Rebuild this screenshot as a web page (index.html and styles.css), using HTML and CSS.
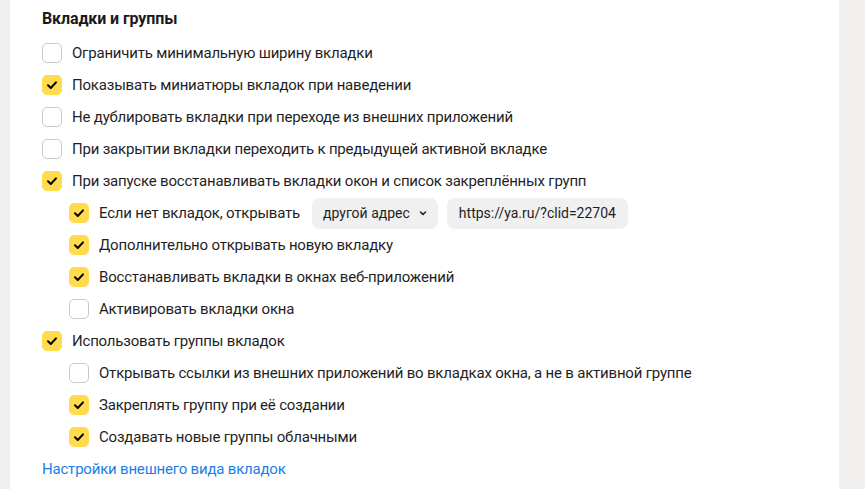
FILE: index.html
```
<!DOCTYPE html>
<html lang="ru">
<head>
<meta charset="utf-8">
<link rel="stylesheet" href="styles.css">
</head>
<body>
<div class="page">
  <section class="panel">
    <h2 class="title">Вкладки и группы</h2>
    <ul class="list">
      <li class="row"><span class="cb"></span><span class="label">Ограничить минимальную ширину вкладки</span></li>
      <li class="row"><span class="cb on"><svg viewBox="0 0 20 20"><path d="M6 10.2l2.8 2.8 5.2-5.6"/></svg></span><span class="label">Показывать миниатюры вкладок при наведении</span></li>
      <li class="row"><span class="cb"></span><span class="label">Не дублировать вкладки при переходе из внешних приложений</span></li>
      <li class="row"><span class="cb"></span><span class="label">При закрытии вкладки переходить к предыдущей активной вкладке</span></li>
      <li class="row"><span class="cb on"><svg viewBox="0 0 20 20"><path d="M6 10.2l2.8 2.8 5.2-5.6"/></svg></span><span class="label">При запуске восстанавливать вкладки окон и список закреплённых групп</span></li>
      <li class="row sub"><span class="cb on"><svg viewBox="0 0 20 20"><path d="M6 10.2l2.8 2.8 5.2-5.6"/></svg></span><span class="label">Если нет вкладок, открывать</span>
        <span class="select">другой адрес<svg class="chev" viewBox="0 0 10 10"><path d="M2.5 4l2.5 2.5 2.5-2.5"/></svg></span>
        <span class="input">https://ya.ru/?clid=22704</span>
      </li>
      <li class="row sub"><span class="cb on"><svg viewBox="0 0 20 20"><path d="M6 10.2l2.8 2.8 5.2-5.6"/></svg></span><span class="label">Дополнительно открывать новую вкладку</span></li>
      <li class="row sub"><span class="cb on"><svg viewBox="0 0 20 20"><path d="M6 10.2l2.8 2.8 5.2-5.6"/></svg></span><span class="label">Восстанавливать вкладки в окнах веб-приложений</span></li>
      <li class="row sub"><span class="cb"></span><span class="label">Активировать вкладки окна</span></li>
      <li class="row"><span class="cb on"><svg viewBox="0 0 20 20"><path d="M6 10.2l2.8 2.8 5.2-5.6"/></svg></span><span class="label">Использовать группы вкладок</span></li>
      <li class="row sub"><span class="cb"></span><span class="label">Открывать ссылки из внешних приложений во вкладках окна, а не в активной группе</span></li>
      <li class="row sub"><span class="cb on"><svg viewBox="0 0 20 20"><path d="M6 10.2l2.8 2.8 5.2-5.6"/></svg></span><span class="label">Закреплять группу при её создании</span></li>
      <li class="row sub"><span class="cb on"><svg viewBox="0 0 20 20"><path d="M6 10.2l2.8 2.8 5.2-5.6"/></svg></span><span class="label">Создавать новые группы облачными</span></li>
    </ul>
    <a class="link" href="#">Настройки внешнего вида вкладок</a>
  </section>
</div>
</body>
</html>
```
FILE: styles.css
```
html, body {
  margin: 0;
  padding: 0;
  background: #f0efed;
  font-family: Roboto, "Noto Sans", sans-serif;
  color: #1f1f1f;
}
.page {
  display: flex;
  height: 489px;
  overflow: hidden;
  padding-left: 10px;
  padding-right: 26px;
}
.panel {
  flex: 1;
  background: #fff;
  padding: 9px 0 0 32px;
}
.title {
  margin: 0 0 8px;
  font-size: 16px;
  font-weight: 700;
  line-height: 20px;
  color: #1a1a1a;
  letter-spacing: -0.1px;
}
.list {
  list-style: none;
  margin: 0;
  padding: 0;
}
.row {
  display: flex;
  align-items: center;
  height: 32px;
  font-size: 15px;
  letter-spacing: -0.2px;
}
.row.sub {
  padding-left: 27px;
}
.cb {
  width: 20px;
  height: 20px;
  box-sizing: border-box;
  border: 1px solid #c9c9c9;
  border-radius: 5px;
  margin-right: 10px;
  flex: none;
  display: flex;
}
.cb.on {
  background: #ffdb4d;
  border-color: #ffdb4d;
}
.cb svg {
  width: 20px;
  height: 20px;
  margin: -1px;
}
.cb svg path {
  fill: none;
  stroke: #000;
  stroke-width: 2;
  stroke-linecap: round;
  stroke-linejoin: round;
}
.label {
  white-space: nowrap;
}
.select {
  display: inline-flex;
  align-items: center;
  height: 31px;
  margin-left: 12px;
  padding: 0 10px 0 11px;
  background: #f0f0f0;
  border-radius: 8px;
  font-size: 14px;
  letter-spacing: 0;
}
.chev {
  width: 10px;
  height: 10px;
  margin-left: 8px;
}
.chev path {
  fill: none;
  stroke: #222;
  stroke-width: 1.6;
  stroke-linecap: round;
  stroke-linejoin: round;
}
.input {
  display: inline-flex;
  align-items: center;
  height: 31px;
  margin-left: 9px;
  padding: 0 12px;
  background: #f0f0f0;
  border-radius: 8px;
  font-size: 14px;
  letter-spacing: 0;
}
.link {
  display: block;
  margin-top: 6px;
  font-size: 15px;
  line-height: 20px;
  color: #1a7ee8;
  text-decoration: none;
  letter-spacing: -0.2px;
}
```
